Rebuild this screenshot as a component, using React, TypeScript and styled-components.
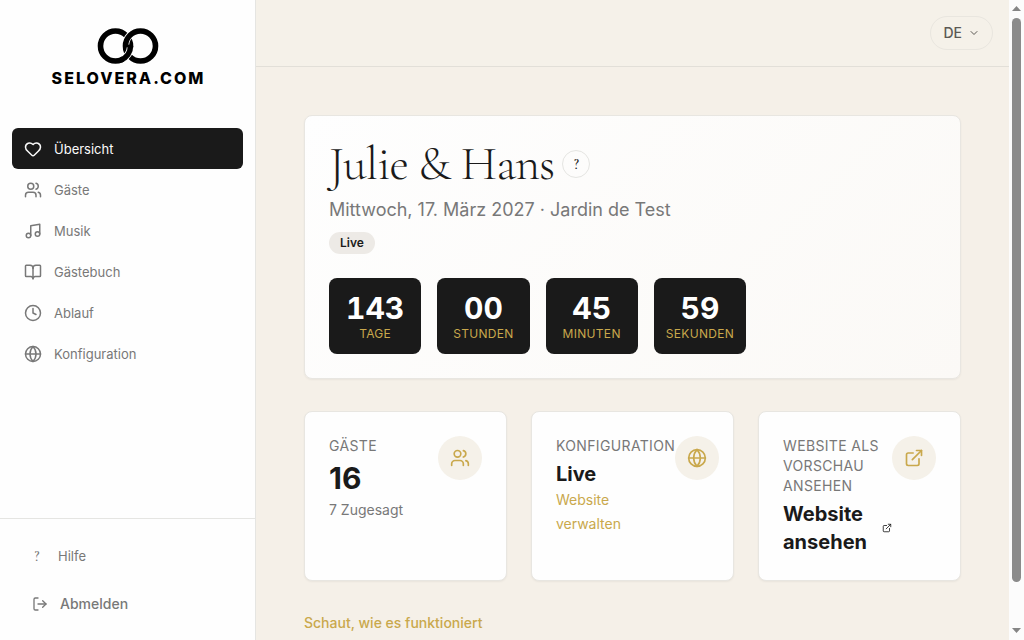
import React from "react";
import styled, { createGlobalStyle } from "styled-components";
import {
  BookOpen,
  ChevronDown,
  Clock,
  ExternalLink,
  Globe,
  Heart,
  LogOut,
  Music,
  Users,
  type LucideIcon,
} from "lucide-react";

const color = {
  ink: "#1a1a1a",
  muted: "#787878",
  gold: "#c9a84c",
  cream: "#f5f1e9",
  page: "#f5f0e8",
  line: "#e5e5e2",
};

const serif = `"Cormorant Garamond", "Liberation Serif", serif`;

const GlobalStyle = createGlobalStyle`
  *, *::before, *::after { box-sizing: border-box; }
  body {
    margin: 0;
    background: ${color.page};
    color: ${color.ink};
    font-family: Inter, "Liberation Sans", sans-serif;
    font-size: 14px;
    line-height: 20px;
  }
  h1, p, dl, dd, ul { margin: 0; padding: 0; }
  a { color: inherit; text-decoration: none; }
  button { font: inherit; cursor: pointer; }
`;

const Shell = styled.div`
  display: grid;
  grid-template-columns: 256px minmax(0, 1fr) 15px;
  height: 100vh;
  overflow: hidden;
`;

const Sidebar = styled.aside`
  display: flex;
  flex-direction: column;
  min-height: 0;
  background: #fefefe;
  border-right: 1px solid ${color.line};
`;

const Brand = styled.a`
  display: flex;
  flex-direction: column;
  align-items: center;
  gap: 3px;
  padding: 27px 0 40px;
`;

const Wordmark = styled.span`
  padding-left: 2px;
  color: #000;
  font-size: 16px;
  font-weight: 800;
  letter-spacing: 2px;
`;

const Nav = styled.nav`
  flex: 1;
  padding: 0 12px;
`;

const NavItem = styled.a<{ $active?: boolean }>`
  display: flex;
  align-items: center;
  gap: 12px;
  height: 41px;
  padding: 0 12px;
  border-radius: 6px;
  background: ${(p) => (p.$active ? color.ink : "transparent")};
  color: ${(p) => (p.$active ? "#fafafa" : color.muted)};
  font-size: 13px;
`;

const SidebarFooter = styled.div`
  display: flex;
  flex-direction: column;
  gap: 28px;
  padding: 27px 32px 26px;
  border-top: 1px solid ${color.line};
`;

const HelpLink = styled.a`
  display: flex;
  align-items: center;
  gap: 16px;
  color: ${color.muted};
  font-size: 13px;
`;

const QuestionMark = styled.span`
  width: 10px;
  text-align: center;
  font-family: ${serif};
  font-size: 16px;
  font-weight: 500;
`;

const LogoutButton = styled.button`
  display: flex;
  align-items: center;
  gap: 12px;
  padding: 0;
  border: 0;
  background: none;
  color: ${color.muted};
  font-weight: 500;
`;

const Main = styled.div`
  min-width: 0;
  overflow: hidden;
`;

const TopBar = styled.header`
  display: flex;
  justify-content: flex-end;
  padding: 16px;
  background: ${color.cream};
  border-bottom: 1px solid #e2dfd8;
`;

const LanguageButton = styled.button`
  display: flex;
  align-items: center;
  gap: 6px;
  height: 34px;
  padding: 0 12px;
  border: 1px solid #e9e6df;
  border-radius: 17px;
  background: transparent;
  color: #5c5954;
  font-weight: 500;
`;

const Content = styled.main`
  display: flex;
  flex-direction: column;
  gap: 32px;
  padding: 48px;
`;

const Card = styled.section`
  padding: 24px;
  border: 1px solid #e8e6e1;
  border-radius: 8px;
  background: #fefefe;
  box-shadow: 0 1px 2px rgba(0, 0, 0, 0.05);
`;

const HeroCard = styled(Card)`
  display: flex;
  flex-direction: column;
  align-items: flex-start;
  background: linear-gradient(135deg, #fefefe, #fbf9f6);
`;

const TitleRow = styled.div`
  display: flex;
  align-items: center;
  gap: 8px;
  margin-bottom: 8px;
`;

const Title = styled.h1`
  font-family: ${serif};
  font-size: 48px;
  font-weight: 300;
  letter-spacing: -0.02em;
  line-height: 48px;
`;

const HintButton = styled.button`
  width: 28px;
  height: 28px;
  padding: 0;
  border: 1px solid ${color.line};
  border-radius: 50%;
  background: transparent;
  color: ${color.ink};
  font-family: ${serif};
  font-size: 16px;
  font-weight: 500;
`;

const EventLine = styled.p`
  margin-bottom: 8px;
  color: ${color.muted};
  font-size: 18px;
  line-height: 28px;
`;

const Badge = styled.span`
  margin-bottom: 24px;
  padding: 3px 11px;
  border-radius: 11px;
  background: #edeae6;
  font-size: 12px;
  font-weight: 600;
  line-height: 16px;
`;

const Countdown = styled.dl`
  display: grid;
  grid-template-columns: repeat(4, 1fr);
  gap: 16px;
`;

const CountdownTile = styled.div`
  display: flex;
  flex-direction: column-reverse;
  padding: 12px;
  border-radius: 8px;
  background: ${color.ink};
  text-align: center;
`;

const CountdownValue = styled.dd`
  color: #fff;
  font-size: 30px;
  font-weight: 700;
  font-variant-numeric: tabular-nums;
  line-height: 36px;
`;

const CountdownLabel = styled.dt`
  color: ${color.gold};
  font-size: 12px;
  letter-spacing: 0.025em;
  line-height: 16px;
  text-transform: uppercase;
`;

const Stats = styled.div`
  display: grid;
  grid-template-columns: repeat(3, minmax(0, 1fr));
  gap: 24px;
`;

const StatCard = styled(Card)`
  display: flex;
  align-items: flex-start;
  justify-content: space-between;
  min-height: 170px;
`;

const StatLabel = styled.p`
  margin-bottom: 4px;
  color: ${color.muted};
  letter-spacing: 0.025em;
  text-transform: uppercase;
`;

const StatNumber = styled.p`
  margin-bottom: 4px;
  font-size: 30px;
  font-weight: 700;
  line-height: 36px;
`;

const StatTitle = styled.p`
  font-size: 20px;
  font-weight: 700;
  line-height: 28px;
`;

const StatNote = styled.p`
  color: ${color.muted};
`;

const ManageLink = styled.a`
  display: block;
  width: min-content;
  color: ${color.gold};
  line-height: 24px;
`;

const PreviewLink = styled.a`
  display: flex;
  align-items: center;
  gap: 8px;

  svg {
    flex: none;
  }
`;

const IconCircle = styled.span`
  display: flex;
  flex: none;
  align-items: center;
  justify-content: center;
  width: 44px;
  height: 44px;
  border-radius: 50%;
  background: ${color.cream};
  color: ${color.gold};
`;

const TourLink = styled.a`
  align-self: flex-start;
  color: ${color.gold};
  font-weight: 500;
`;

const ScrollTrack = styled.div`
  display: flex;
  flex-direction: column;
  align-items: center;
  justify-content: space-between;
  padding: 6px 0 7px;
  background: #fcfcfc;
`;

const ScrollThumb = styled.div`
  flex: 0 0 90%;
  width: 9px;
  margin: 7px 0 auto;
  border-radius: 5px;
  background: #8b8b8b;
`;

const ScrollArrow = ({ down = false }: { down?: boolean }) => (
  <svg width="9" height="5" viewBox="0 0 9 5" fill="#858585" aria-hidden="true">
    <path d={down ? "M0 0h9L4.5 5z" : "M0 5h9L4.5 0z"} />
  </svg>
);

const Rings = () => (
  <svg width="62" height="38" viewBox="0 0 62 38" fill="none" aria-hidden="true">
    <circle cx="18.5" cy="19" r="15" stroke="#000" strokeWidth="5.6" />
    <path d="M28.6 17.5A15 15 0 0 1 36 6" stroke="#fefefe" strokeWidth="7.2" />
    <circle cx="43.5" cy="19" r="15" stroke="#000" strokeWidth="5.6" />
    <path d="M33.4 20.5A15 15 0 0 1 26 32" stroke="#fefefe" strokeWidth="7.2" />
    <path d="M33.5 19A15 15 0 0 1 23.6 33.1" stroke="#000" strokeWidth="5.6" />
  </svg>
);

const navItems: { label: string; icon: LucideIcon }[] = [
  { label: "Übersicht", icon: Heart },
  { label: "Gäste", icon: Users },
  { label: "Musik", icon: Music },
  { label: "Gästebuch", icon: BookOpen },
  { label: "Ablauf", icon: Clock },
  { label: "Konfiguration", icon: Globe },
];

const countdown = [
  { value: "143", label: "Tage" },
  { value: "00", label: "Stunden" },
  { value: "45", label: "Minuten" },
  { value: "59", label: "Sekunden" },
];

export default function App() {
  return (
    <>
      <GlobalStyle />
      <Shell>
        <Sidebar>
          <Brand href="#">
            <Rings />
            <Wordmark>SELOVERA.COM</Wordmark>
          </Brand>
          <Nav>
            {navItems.map(({ label, icon: Icon }, i) => (
              <NavItem key={label} href="#" $active={i === 0}>
                <Icon size={18} />
                {label}
              </NavItem>
            ))}
          </Nav>
          <SidebarFooter>
            <HelpLink href="#">
              <QuestionMark>?</QuestionMark>
              Hilfe
            </HelpLink>
            <LogoutButton type="button">
              <LogOut size={16} />
              Abmelden
            </LogoutButton>
          </SidebarFooter>
        </Sidebar>

        <Main>
          <TopBar>
            <LanguageButton type="button">
              DE
              <ChevronDown size={12} />
            </LanguageButton>
          </TopBar>
          <Content>
            <HeroCard>
              <TitleRow>
                <Title>Julie &amp; Hans</Title>
                <HintButton type="button">?</HintButton>
              </TitleRow>
              <EventLine>Mittwoch, 17. März 2027 · Jardin de Test</EventLine>
              <Badge>Live</Badge>
              <Countdown>
                {countdown.map(({ value, label }) => (
                  <CountdownTile key={label}>
                    <CountdownLabel>{label}</CountdownLabel>
                    <CountdownValue>{value}</CountdownValue>
                  </CountdownTile>
                ))}
              </Countdown>
            </HeroCard>

            <Stats>
              <StatCard>
                <div>
                  <StatLabel>Gäste</StatLabel>
                  <StatNumber>16</StatNumber>
                  <StatNote>7 Zugesagt</StatNote>
                </div>
                <IconCircle>
                  <Users size={20} />
                </IconCircle>
              </StatCard>
              <StatCard>
                <div>
                  <StatLabel>Konfiguration</StatLabel>
                  <StatTitle>Live</StatTitle>
                  <ManageLink href="#">Website verwalten</ManageLink>
                </div>
                <IconCircle>
                  <Globe size={20} />
                </IconCircle>
              </StatCard>
              <StatCard>
                <div>
                  <StatLabel>Website als Vorschau ansehen</StatLabel>
                  <PreviewLink href="#">
                    <StatTitle>Website ansehen</StatTitle>
                    <ExternalLink size={10} />
                  </PreviewLink>
                </div>
                <IconCircle>
                  <ExternalLink size={20} />
                </IconCircle>
              </StatCard>
            </Stats>

            <TourLink href="#">Schaut, wie es funktioniert</TourLink>
          </Content>
        </Main>

        <ScrollTrack>
          <ScrollArrow />
          <ScrollThumb />
          <ScrollArrow down />
        </ScrollTrack>
      </Shell>
    </>
  );
}
